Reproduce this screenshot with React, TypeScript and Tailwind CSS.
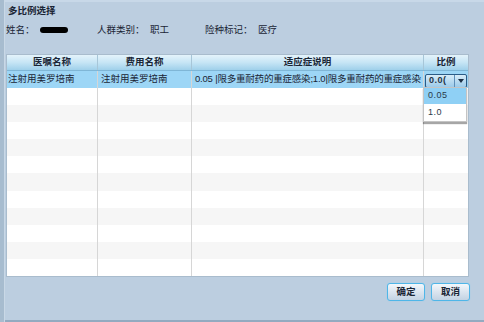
import React from "react";

const font = { fontFamily: '"Liberation Sans", "Noto Sans CJK SC", sans-serif' };

const cols = ["w-[91px]", "w-[94px]", "w-[232px]", "w-[45px]"];

function Row({ i }: { i: number }) {
  const bg = i % 2 === 0 ? "bg-white" : "bg-[#f6f6f6]";
  return (
    <div className={`flex flex-1 ${bg}`}>
      <div className={`${cols[0]} border-r border-[#d6d6d6]`} />
      <div className={`${cols[1]} border-r border-[#d6d6d6]`} />
      <div className={`${cols[2]} border-r border-[#d6d6d6]`} />
      <div className="flex-1" />
    </div>
  );
}

export default function App() {
  return (
    <div
      className="w-[484px] h-[322px] bg-[#bccee0] flex overflow-hidden text-[#1a2535]"
      style={font}
    >
      <div className="w-[5px] h-full bg-[#a7bccf] border-r border-[#c9d8e6]" />
      <div className="flex-1 flex flex-col">
        <div className="h-[20px] flex items-center pl-[3px] text-[9.5px] font-bold border-t-2 border-[#c8d8e8]">
          多比例选择
        </div>
        <div className="h-[20px] flex items-center pl-[1px] text-[9.5px]">
          <span className="w-[34px]">姓名：</span>
          <span className="w-[57px] flex items-center">
            <span className="block w-[28px] h-[6px] rounded-full bg-black" />
          </span>
          <span className="w-[53px]">人群类别：</span>
          <span className="w-[55px]">职工</span>
          <span className="w-[53px]">险种标记：</span>
          <span>医疗</span>
        </div>
        <div className="mt-[14px] ml-[1px] w-[463px] h-[223px] flex flex-col bg-white border border-[#a9bccd] relative">
          <div className="h-[16px] flex text-[9.5px] font-bold bg-gradient-to-b from-[#e4f3fb] via-[#c6e5f5] to-[#9fd0ea] border-b border-[#7fb6d6]">
            <div className={`${cols[0]} flex items-center justify-center border-r border-[#a7c6d8]`}>医嘱名称</div>
            <div className={`${cols[1]} flex items-center justify-center border-r border-[#a7c6d8]`}>费用名称</div>
            <div className={`${cols[2]} flex items-center justify-center border-r border-[#a7c6d8]`}>适应症说明</div>
            <div className="flex-1 flex items-center justify-center">比例</div>
          </div>
          <div className="flex-1 flex flex-col">
            <div className="h-[17px] flex bg-[#9dd6f6] text-[9.5px]">
              <div className={`${cols[0]} flex items-center pl-[1px] border-r border-[#d6d6d6]`}>注射用美罗培南</div>
              <div className={`${cols[1]} flex items-center pl-[3px] border-r border-[#d6d6d6]`}>注射用美罗培南</div>
              <div className={`${cols[2]} flex items-center pl-[3px] border-r border-[#d6d6d6] whitespace-nowrap overflow-hidden tracking-[-0.2px]`}>
                0.05 |限多重耐药的重症感染;1.0|限多重耐药的重症感染
              </div>
              <div className="flex-1 flex items-center pl-[1px]">
                <div className="w-[42px] h-[14px] mt-[2px] flex rounded-[2px] border border-[#2b5b86] bg-gradient-to-b from-[#d8ecf8] to-[#9ccbea] shadow-[0_1px_1px_rgba(0,0,0,0.3)]">
                  <div className="flex-1 flex items-center pl-[3px] text-[9px] font-bold text-[#243447] overflow-hidden whitespace-nowrap tracking-[0.5px]">
                    0.0(
                  </div>
                  <div className="w-[12px] flex items-center justify-center border-l border-[#5f8fb8]">
                    <svg width="6" height="4" viewBox="0 0 6 4">
                      <path d="M0 0 L6 0 L3 4 Z" fill="#1c2e44" />
                    </svg>
                  </div>
                </div>
              </div>
            </div>
            <div className="flex-1 flex flex-col">
              {Array.from({ length: 11 }).map((_, i) => (
                <Row key={i} i={i} />
              ))}
            </div>
          </div>
          <div className="absolute left-[416px] top-[32px] w-[44px] bg-white border border-[#c4c4c4] shadow-[0_2px_1px_rgba(0,0,0,0.35)] text-[9px] tracking-[0.5px] text-[#2a3a4a]">
            <div className="h-[16px] flex items-center pl-[4px] bg-[#8fd0f5]">0.05</div>
            <div className="h-[17px] flex items-center pl-[4px]">1.0</div>
          </div>
        </div>
        <div className="mt-[6px] h-[18px] flex justify-end gap-[6px] pr-[14px] text-[9.5px] font-bold">
          <button className="w-[38px] h-[18px] rounded-[3px] border border-[#4fb6e8] bg-gradient-to-b from-[#f3f7fb] to-[#c3d3e3] shadow-[0_0_1px_#7fd0f5] flex items-center justify-center">
            确定
          </button>
          <button className="w-[39px] h-[18px] rounded-[3px] border border-[#4fb6e8] bg-gradient-to-b from-[#f3f7fb] to-[#c3d3e3] shadow-[0_0_1px_#7fd0f5] flex items-center justify-center">
            取消
          </button>
        </div>
        <div className="flex-1" />
        <div className="h-[2px] bg-[#93aac0]" />
      </div>
    </div>
  );
}
